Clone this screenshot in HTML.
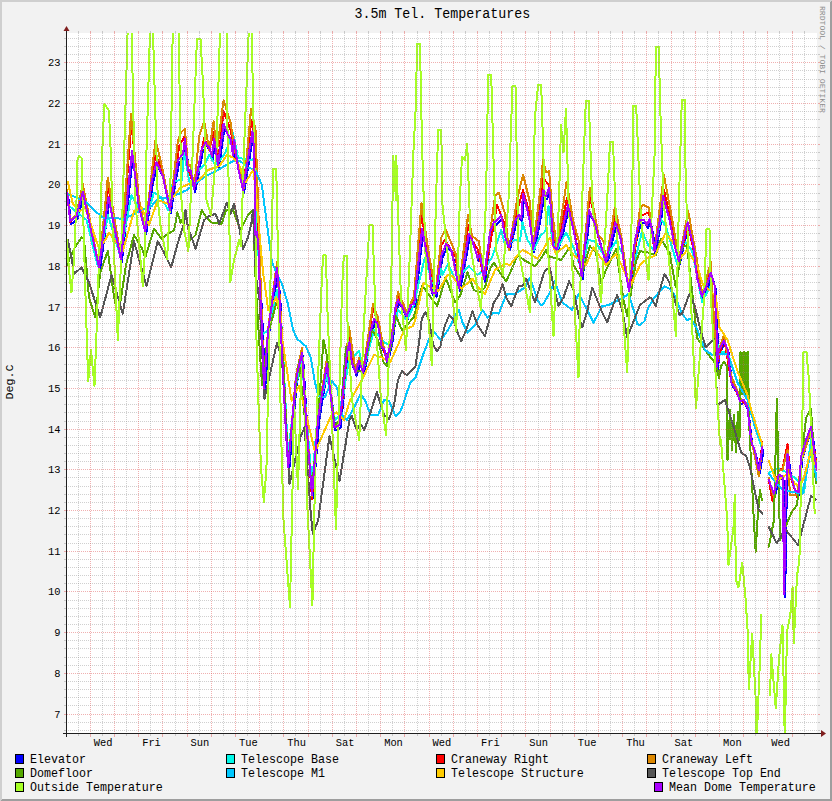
<!DOCTYPE html><html><head><meta charset="utf-8"><style>html,body{margin:0;padding:0;width:832px;height:801px;overflow:hidden;background:#f2f2f2}svg{display:block}text{font-family:"Liberation Mono"}</style></head><body>
<svg width="832" height="801" viewBox="0 0 832 801" shape-rendering="crispEdges">
<rect x="0" y="0" width="832" height="801" fill="#f2f2f2"/>
<polygon points="0,0 832,0 830,2 2,2 2,799 0,801" fill="#cfcfcf"/>
<polygon points="832,0 832,801 0,801 2,799 830,799 830,2" fill="#9e9e9e"/>
<rect x="67" y="33" width="750" height="700" fill="#ffffff"/>
<clipPath id="cv"><rect x="67" y="33" width="750" height="700"/></clipPath><g fill="none" stroke-width="2" stroke-linejoin="round" stroke-linecap="round" shape-rendering="crispEdges" clip-path="url(#cv)"><polyline stroke="#0000ff" points="68.1,195.5 71.2,224.2 77.5,219.0 83.8,195.0 100.0,270.5 109.4,200.0 121.9,262.4 133.0,154.0 140.0,210.5 146.2,234.2 152.5,185.5 157.5,165.0 163.8,179.0 171.0,213.0 174.0,191.8 179.0,163.0 184.0,156.8 185.9,141.8 189.0,174.2 191.5,173.0 195.2,192.0 202.8,151.8 206.5,145.5 210.2,150.5 212.8,159.2 215.2,141.8 219.0,168.0 224.6,126.8 229.0,138.0 231.5,141.8 234.0,158.0 235.2,143.0 239.0,170.5 244.0,193.0 253.4,134.2 255.2,153.0 256.5,238.0 258.0,235.0 259.5,253.0 260.5,283.0 261.8,308.0 263.0,333.0 265.0,391.0 269.2,333.0 278.0,270.5 280.5,303.0 281.8,333.0 286.8,433.0 289.2,470.5 296.8,383.0 303.0,355.5 306.8,420.5 313.0,498.0 319.2,420.5 328.0,366.8 335.5,430.5 340.5,428.0 348.0,355.5 350.5,345.5 352.8,365.5 356.5,375.5 360.2,364.2 364.0,375.5 371.5,334.2 375.2,321.8 379.0,328.0 382.8,350.5 385.2,351.8 387.8,364.2 392.8,340.5 396.5,310.5 399.0,303.0 402.8,309.2 407.8,319.2 411.5,308.0 415.2,306.8 417.6,281.7 423.1,232.2 430.0,268.0 432.7,295.4 436.8,296.8 442.3,258.3 447.2,246.8 447.8,247.3 452.2,253.0 460.0,291.0 463.5,273.0 469.8,236.8 473.5,244.2 478.5,260.5 481.0,258.0 485.0,282.0 491.0,235.5 494.8,225.5 498.5,223.0 502.2,218.0 506.0,239.2 509.8,250.5 516.0,224.2 519.8,218.0 522.2,221.8 524.1,196.8 527.2,208.0 531.0,225.5 534.1,251.8 539.8,223.0 542.0,210.5 544.5,193.0 545.0,198.0 547.0,199.2 550.1,190.5 552.0,213.0 554.5,249.2 557.6,253.0 563.2,233.0 568.9,208.0 574.5,233.0 579.5,256.8 582.6,279.2 585.8,250.5 590.1,213.0 595.8,226.8 603.2,253.0 607.0,265.5 612.0,243.0 616.4,225.5 622.0,243.0 624.5,263.0 630.1,294.2 635.8,244.2 641.0,223.0 644.9,223.0 648.0,228.0 650.5,221.8 653.0,233.0 655.5,254.2 660.5,225.5 664.2,199.2 670.5,223.0 675.5,248.0 679.9,264.2 684.2,244.2 688.6,225.5 694.2,248.0 698.0,280.5 703.0,299.2 708.0,288.0 711.8,275.5 715.5,288.0 717.5,333.0 717.5,370.0 719.8,353.0 724.8,344.2 728.5,351.8 732.2,385.5 737.2,393.0 741.0,404.2 744.8,403.0 748.5,410.5 752.2,444.2 756.0,454.2 759.8,473.0 763.5,450.5"/><polyline stroke="#0000ff" points="769.8,483.0 774.8,496.8 779.8,478.0 783.5,479.2 785.3,597.0 786.0,523.0 788.5,456.8 791.0,475.5 796.0,493.0 799.8,495.5 802.0,460.0 807.0,443.0 812.0,429.6 816.8,467.0 818.0,473.0"/><polyline stroke="#00f8e8" points="67.8,205.0 86.5,220.0 97.8,266.0 108.0,215.0 120.0,255.0 131.5,195.0 141.5,213.8 144.0,226.2 154.0,192.5 161.5,197.5 168.0,210.0 173.0,181.2 181.8,180.0 184.2,152.5 190.0,185.0 199.2,170.0 204.2,165.0 209.2,155.0 215.5,165.0 224.2,155.0 233.0,133.1 238.0,157.5 248.0,160.0 251.8,160.0 255.5,157.5 257.4,230.0 262.0,335.0 268.0,330.0 277.0,290.0 282.0,330.0 288.0,455.0 296.0,385.0 302.0,362.0 306.0,410.0 312.0,485.0 318.0,410.0 327.0,375.0 335.0,420.0 340.0,415.0 349.0,360.0 359.2,351.2 363.0,372.0 374.0,330.0 384.2,342.5 390.0,345.0 398.0,310.0 407.0,320.0 414.0,305.0 416.6,292.4 424.8,258.0 429.0,271.8 435.8,290.0 441.3,269.0 442.5,275.0 447.5,265.0 448.2,263.6 455.0,280.0 462.5,272.5 468.8,266.2 477.5,275.0 484.0,270.0 492.5,256.2 501.2,230.0 505.0,245.0 515.0,240.0 520.0,241.2 522.5,222.5 527.5,240.0 533.8,250.0 540.0,236.2 544.0,232.5 546.0,230.0 548.5,206.2 552.2,240.0 556.6,250.0 566.0,232.5 573.5,247.5 581.6,270.0 588.5,240.0 594.8,241.2 606.0,258.0 616.0,241.2 623.0,255.0 629.0,285.0 640.0,240.0 642.0,231.2 648.2,245.0 654.5,250.0 660.8,218.8 665.8,226.2 677.0,263.8 684.5,241.2 692.0,250.0 697.0,275.0 702.0,302.0 711.0,285.0 716.0,340.0 720.0,352.0 727.5,352.0 737.5,382.0 747.5,398.0 755.0,427.0 762.5,450.0"/><polyline stroke="#00f8e8" points="768.8,472.5 777.5,468.8 787.5,472.5 797.5,480.0 804.0,492.5 811.0,440.0 817.0,470.0"/><polyline stroke="#ff0000" points="67.1,191.0 70.2,222.0 76.5,215.0 82.8,188.0 99.0,267.0 108.0,185.0 120.9,259.0 131.5,122.0 139.0,204.0 145.2,231.0 155.5,154.0 162.8,172.0 170.0,210.0 179.2,146.2 184.9,136.0 188.0,168.0 194.2,188.0 204.2,137.5 209.2,150.0 214.0,132.0 218.0,163.0 223.6,111.2 230.5,130.0 235.5,154.0 243.0,189.0 251.5,120.0 255.5,140.0 258.0,220.0 264.0,386.0 268.0,330.0 277.0,265.0 280.0,300.0 286.0,430.0 288.2,467.0 296.0,378.0 302.0,350.0 306.0,416.0 312.0,499.0 318.0,416.0 327.0,361.0 334.5,427.0 340.0,424.0 349.0,335.0 355.5,372.0 359.0,360.0 363.0,372.0 373.0,309.0 378.0,322.0 382.0,345.0 387.0,361.0 392.0,335.0 398.0,296.0 406.8,314.0 414.0,300.0 421.4,214.0 429.0,260.0 435.8,293.0 441.3,245.0 445.0,240.0 456.0,258.0 459.0,288.0 468.0,225.0 472.0,240.0 478.0,250.0 484.0,279.0 497.0,205.0 505.0,225.0 508.8,250.0 517.5,210.0 523.0,190.0 530.0,215.0 533.0,249.0 542.0,190.0 543.0,178.0 549.0,185.0 552.0,210.0 556.6,250.0 567.0,198.0 573.5,226.0 581.6,276.0 589.8,195.0 598.5,238.0 606.0,262.0 615.0,215.0 621.0,238.0 629.0,291.0 640.0,215.0 643.0,215.0 649.0,212.0 654.5,251.0 664.0,190.0 673.0,230.0 679.0,261.0 688.0,225.0 697.0,265.0 702.0,296.0 711.0,268.0 716.5,366.0 724.0,338.0 731.0,380.0 740.0,400.0 747.5,406.0 751.0,440.0 758.8,472.0 762.5,442.5"/><polyline stroke="#ff0000" points="768.8,480.0 772.5,501.2 778.8,470.0 782.5,468.8 787.5,443.8 790.0,475.0 797.5,497.5 801.0,460.0 811.0,428.0 817.0,468.0"/><polyline stroke="#dd8800" points="67.1,190.0 70.2,221.0 76.5,214.0 82.8,184.0 99.0,267.0 107.8,177.5 120.9,258.0 131.0,114.0 139.0,200.0 145.2,230.0 155.5,140.0 162.8,170.0 170.0,209.0 178.0,140.0 181.0,132.5 184.9,128.8 188.0,166.2 190.5,165.0 194.2,187.5 199.2,136.2 204.2,121.2 209.2,150.0 213.6,121.2 216.8,152.5 223.6,100.0 230.5,122.5 235.5,152.5 244.0,188.0 251.0,108.8 255.5,130.0 258.0,200.0 264.0,386.0 268.0,330.0 277.0,262.0 280.0,300.0 286.0,430.0 288.2,466.0 296.0,375.0 302.0,348.0 306.0,415.0 312.0,496.0 318.0,415.0 327.0,358.0 334.5,427.0 340.0,422.0 349.0,327.0 355.5,371.0 359.0,358.0 363.0,371.0 373.0,303.8 378.0,318.0 382.0,340.0 387.0,360.0 392.0,333.0 398.0,292.0 406.8,312.0 414.0,296.0 421.5,203.0 429.0,255.0 435.8,292.0 441.3,237.5 445.5,229.2 456.2,255.0 459.0,287.0 468.1,214.4 472.0,236.0 478.8,241.2 484.0,277.0 495.0,196.2 498.8,192.5 505.0,213.8 508.8,250.0 517.5,197.5 523.1,175.0 530.0,202.5 533.0,247.5 541.2,182.5 542.9,160.0 546.0,172.5 549.1,171.2 552.2,210.0 556.6,249.0 566.6,181.9 573.5,222.5 578.5,240.0 581.6,275.0 589.8,187.5 598.5,235.0 603.5,241.2 606.0,262.0 614.8,207.5 621.0,235.0 629.0,290.0 640.0,208.8 643.2,205.0 648.9,207.5 654.5,250.0 663.9,175.0 673.2,225.0 678.9,260.0 688.2,211.2 697.0,260.0 702.0,295.0 710.8,262.0 716.5,365.0 718.8,350.0 723.8,335.0 731.0,375.0 740.0,398.0 747.5,404.0 751.0,438.0 758.8,476.2 762.5,445.0"/><polyline stroke="#dd8800" points="768.8,478.0 773.8,497.5 778.8,470.0 782.5,470.0 787.5,450.0 790.0,495.0 797.5,495.0 801.0,462.0 811.0,430.0 817.0,470.0"/><polyline stroke="#55a800" points="67.0,265.0 74.0,248.8 81.5,237.5 84.0,238.8 89.0,297.5 95.2,317.5 100.2,272.5 107.8,251.0 113.0,290.0 118.0,318.0 126.0,265.0 134.0,235.0 141.5,247.5 145.2,257.5 154.0,228.8 161.5,238.8 166.5,235.0 174.2,230.0 177.4,212.5 180.5,222.5 185.5,215.0 190.5,240.0 195.5,235.0 201.8,210.0 205.5,216.2 211.8,222.5 221.8,223.8 226.0,210.0 233.0,210.0 240.5,230.0 248.0,215.0 251.8,211.2 253.0,211.0 256.0,290.0 262.0,385.0 268.0,335.0 277.0,300.0 282.0,330.0 288.0,465.0 296.0,385.0 299.0,362.0 305.0,420.0 312.0,490.0 318.0,420.0 323.5,340.0 327.0,356.0 334.5,425.0 340.0,420.0 346.0,347.0 355.0,370.0 363.0,372.0 372.0,330.0 378.0,340.0 383.5,362.0 387.0,366.0 396.0,316.0 401.8,330.0 408.0,323.8 413.9,317.0 422.1,285.5 437.2,306.0 445.0,280.0 445.5,277.3 455.0,302.5 460.0,296.2 467.5,272.5 473.8,290.0 480.0,292.5 485.0,287.5 490.0,268.8 493.8,262.5 498.8,271.2 506.2,281.2 512.5,267.5 517.5,255.0 523.8,260.0 535.0,266.2 542.5,256.2 546.0,250.0 548.5,256.2 561.0,260.0 569.8,247.5 573.5,265.0 581.0,277.5 589.8,246.2 596.0,252.5 601.0,283.0 606.0,270.0 616.0,248.8 623.5,300.0 627.2,316.2 636.0,261.2 640.0,251.2 648.2,252.5 655.8,255.0 660.8,238.8 669.5,252.5 675.8,287.5 682.0,247.5 687.0,245.0 694.5,312.5 697.0,337.5 705.0,350.0 716.5,365.0 719.0,378.0 721.0,366.0 724.0,362.0 727.0,366.0 727.5,460.0 730.0,410.0 732.0,450.0 734.0,415.0 736.0,452.0 738.0,412.0 739.5,440.0 740.5,352.0 742.0,394.0 744.0,352.0 746.0,394.0 748.0,352.0 748.6,394.0 749.0,420.0 753.8,520.0 755.7,551.6 757.5,520.0 760.0,490.0 762.0,500.0"/><polyline stroke="#55a800" points="768.7,546.7 774.0,520.0 776.8,399.0 780.0,540.0 791.4,512.6 797.0,505.0 806.0,418.0 811.0,408.7 815.8,483.0"/><rect x="740.5" y="352" width="8" height="42" fill="#55a800" stroke="none"/><polyline stroke="#00c8ff" points="67.8,194.0 71.5,195.6 85.2,201.2 95.2,211.2 102.8,217.5 116.5,217.5 122.8,220.0 134.0,213.8 144.0,208.8 151.5,206.2 159.0,197.5 168.0,198.8 186.8,190.0 205.5,176.2 218.0,170.0 228.0,163.8 233.0,161.2 240.5,161.2 248.0,167.5 255.5,170.0 261.8,185.0 272.0,262.5 277.0,273.8 282.0,283.8 288.2,305.0 293.2,330.0 297.0,338.8 305.8,346.2 310.8,357.5 314.5,380.0 318.2,396.2 324.5,397.5 332.0,381.2 337.0,387.5 342.0,415.0 347.0,420.0 354.2,407.5 360.5,393.8 365.5,401.2 370.5,415.0 378.0,415.0 384.2,400.0 389.2,401.2 395.5,416.2 400.5,411.2 403.0,405.0 406.8,392.5 410.5,382.5 415.5,377.5 423.0,355.0 429.2,338.8 433.0,331.0 441.0,340.0 448.0,330.0 452.0,322.5 455.0,315.0 458.8,310.0 462.5,322.5 467.5,332.5 475.0,325.0 482.5,310.0 487.5,317.5 493.8,312.5 498.8,313.8 505.0,297.5 507.5,293.8 515.0,293.8 525.0,287.5 530.0,277.5 537.5,300.0 541.0,305.0 542.5,305.0 543.5,303.8 549.8,292.5 554.8,281.2 562.2,302.5 572.2,310.0 578.5,293.8 586.0,307.5 593.5,322.5 602.2,306.2 608.5,305.0 616.0,301.2 623.5,297.5 628.5,293.8 636.0,317.5 637.0,323.8 639.5,325.0 640.0,325.0 644.5,321.2 648.2,307.5 654.5,297.5 660.8,290.0 664.5,286.2 669.5,288.8 674.5,295.0 682.0,313.8 687.0,320.0 690.8,318.8 697.0,328.8 705.0,350.0 712.5,355.0 720.0,354.0 727.5,354.0 737.5,382.5 747.5,400.0 755.0,427.5 762.5,445.0"/><polyline stroke="#00c8ff" points="768.8,473.8 782.5,490.0 802.5,493.8 811.0,450.0 817.0,480.0"/><polyline stroke="#ffcc00" points="67.8,182.0 72.8,203.8 80.2,211.2 85.0,207.0 99.0,248.8 105.2,240.0 109.0,232.5 122.8,251.2 134.0,211.2 141.5,207.5 149.0,225.0 157.8,200.0 168.0,203.8 180.5,187.5 199.2,180.0 208.0,170.0 219.2,166.2 226.8,155.0 233.0,157.5 239.2,165.0 245.5,182.5 253.0,170.0 255.5,186.2 258.0,217.5 259.5,233.8 263.2,273.8 264.2,280.0 268.2,310.0 276.4,297.5 280.8,317.5 282.0,337.5 291.6,401.0 299.0,386.0 305.0,410.0 315.0,452.0 331.0,416.0 336.6,412.5 344.0,420.0 349.8,401.0 360.5,382.5 374.0,355.0 381.0,357.0 390.0,362.5 398.0,345.0 404.0,330.0 413.0,326.0 415.2,320.0 423.5,282.8 430.3,286.9 438.6,291.0 440.0,288.0 447.5,275.0 452.5,276.2 461.2,288.8 472.5,278.8 477.5,286.2 485.0,293.8 495.0,270.0 505.0,263.8 510.0,265.0 517.5,255.0 522.5,250.0 527.5,252.5 537.5,258.8 544.0,248.0 549.8,237.5 556.0,253.8 566.0,245.0 573.5,255.0 586.0,265.0 593.5,247.5 606.0,265.0 616.0,253.8 631.0,285.0 640.0,265.0 648.2,257.5 654.5,256.2 665.8,232.5 674.5,245.0 680.8,258.0 687.0,250.0 697.0,265.0 703.0,285.0 709.5,290.0 715.8,296.2 719.5,327.5 727.5,340.0 737.5,371.2 747.5,395.0 751.2,410.0 757.5,430.0 762.5,445.0"/><polyline stroke="#ffcc00" points="768.8,461.2 776.2,481.2 787.5,473.8 795.0,483.8 800.0,486.2 804.0,477.5 811.0,450.0 817.0,470.0"/><polyline stroke="#555555" points="67.8,240.0 71.5,257.5 74.0,273.8 81.5,267.5 89.0,282.5 100.2,317.5 111.5,275.0 122.8,313.8 134.0,241.2 146.5,286.2 157.8,241.2 164.0,252.5 171.1,267.5 178.0,242.5 184.2,222.5 185.5,210.0 188.0,227.5 195.5,248.8 204.2,220.0 209.2,216.2 215.5,213.8 219.2,223.8 226.8,202.5 230.5,213.8 234.2,203.8 239.2,227.5 243.0,248.8 248.0,237.5 251.8,221.2 253.0,210.0 256.0,277.0 259.5,300.0 264.5,398.8 277.0,342.5 282.0,360.0 289.5,483.8 300.8,436.2 304.5,427.5 310.8,513.8 312.9,534.4 318.2,520.0 329.5,436.2 339.5,481.2 349.5,420.0 351.8,416.2 356.8,430.0 360.5,423.8 364.2,430.0 370.5,412.5 376.8,391.9 384.0,415.0 389.0,419.0 394.0,405.0 398.0,380.0 401.8,371.2 406.8,375.0 410.5,371.2 415.5,366.2 419.2,341.2 421.8,318.8 425.5,311.9 429.2,321.2 433.0,343.8 436.8,351.2 440.5,346.2 444.2,327.5 449.2,315.0 453.8,320.0 457.5,332.5 461.2,341.2 466.2,330.0 472.5,311.2 477.5,325.0 485.0,336.2 493.8,302.5 498.8,295.0 502.5,283.8 506.2,297.5 511.2,306.2 518.8,286.2 522.5,286.2 526.2,278.8 530.0,288.8 535.0,302.5 544.0,272.5 546.0,270.0 549.8,267.5 553.5,286.2 558.5,306.2 563.5,297.5 569.1,281.2 573.5,290.0 578.5,315.0 582.2,327.5 587.2,311.2 592.2,287.5 597.2,300.0 602.2,312.5 607.2,322.5 612.2,307.5 617.2,295.0 622.2,310.0 627.2,337.5 636.0,315.0 640.0,305.0 649.5,297.5 652.0,298.8 655.8,306.2 659.5,291.2 664.5,273.8 669.5,282.5 675.8,303.8 679.5,315.0 682.0,313.8 689.5,293.8 694.5,305.0 700.8,331.2 705.8,347.5 713.8,338.8 717.5,405.0 725.0,400.0 733.8,427.5 741.2,452.5 746.2,456.2 750.0,467.5 755.0,492.5 758.8,510.0 762.5,513.8"/><polyline stroke="#555555" points="768.7,527.0 776.8,543.4 785.0,528.8 798.0,545.0 811.0,496.0 815.8,499.6"/><polyline stroke="#a6ff24" points="67.0,240.0 69.0,270.0 71.5,292.5 74.0,260.0 76.5,200.0 77.5,160.0 79.0,156.0 81.5,158.0 82.8,200.0 85.0,280.0 88.2,381.0 91.0,350.0 94.5,386.0 97.0,320.0 101.0,200.0 102.8,135.0 104.5,104.0 108.5,110.0 110.0,130.0 113.0,230.0 117.8,340.0 120.0,290.0 122.8,200.0 127.8,25.0 131.5,25.0 135.2,200.0 142.8,286.0 145.0,250.0 146.5,150.0 150.2,25.0 152.8,25.0 157.8,200.0 161.0,230.0 167.1,258.8 170.2,200.0 172.8,25.0 178.5,25.0 181.5,200.0 184.0,230.0 188.4,251.2 192.8,150.0 196.5,50.0 197.5,38.5 200.5,38.5 202.8,80.0 204.0,110.0 206.5,200.0 211.0,215.0 216.5,150.0 220.2,25.0 226.5,25.0 226.5,80.0 229.0,200.0 230.2,282.5 234.0,260.0 236.5,251.0 239.0,240.0 241.0,246.0 244.0,150.0 249.0,25.0 251.5,25.0 255.2,200.0 256.5,340.0 259.0,420.0 261.2,470.0 263.8,501.9 266.4,470.0 270.0,300.0 272.5,200.0 273.2,168.5 276.2,168.5 277.0,200.0 280.8,420.0 283.5,520.0 290.0,606.8 292.7,480.0 294.0,400.0 298.0,489.0 301.0,380.0 303.0,358.0 305.0,400.0 307.0,500.0 312.4,605.5 315.0,480.0 318.0,380.0 321.4,290.0 323.0,255.4 326.0,255.4 327.0,300.0 332.0,420.0 336.0,529.4 338.6,420.0 342.0,290.0 343.8,255.7 346.8,255.7 347.6,330.0 352.0,400.0 359.2,440.0 363.6,330.0 368.0,250.0 369.5,224.8 372.5,224.8 376.0,330.0 381.0,400.0 386.1,435.0 391.0,300.0 393.2,156.0 396.0,200.0 396.2,156.0 401.0,300.0 406.0,350.0 410.0,250.0 413.5,150.0 416.0,102.5 417.0,43.5 420.0,43.5 421.0,97.5 422.2,150.0 427.0,300.0 431.8,365.0 436.0,200.0 438.2,129.8 441.2,129.8 442.2,177.0 442.2,202.0 447.2,250.0 456.2,331.0 459.8,200.0 462.0,157.0 465.0,160.0 467.2,143.8 471.0,250.0 481.0,310.0 486.0,200.0 488.2,74.8 491.2,74.8 496.0,250.0 503.0,275.0 508.5,200.0 512.5,86.0 515.5,86.0 518.5,250.0 530.0,312.5 533.5,200.0 534.8,117.5 538.2,84.8 541.2,84.8 544.8,200.0 553.5,336.2 559.0,200.0 561.0,125.0 563.5,152.5 566.0,108.8 568.5,200.0 578.5,377.5 582.2,200.0 585.8,101.0 588.8,101.0 592.2,200.0 601.0,302.5 607.2,200.0 610.0,142.2 613.0,142.2 616.0,220.0 627.2,372.5 632.2,200.0 633.2,106.0 636.2,106.0 641.0,220.0 648.5,280.0 654.8,150.0 655.8,47.2 658.8,47.2 660.2,107.0 663.5,200.0 676.0,336.0 679.0,200.0 681.8,99.8 684.8,99.8 685.2,157.0 687.0,220.0 696.0,408.0 704.0,300.0 706.5,229.0 709.5,229.0 711.0,300.0 720.0,444.0 721.0,440.0 727.2,520.0 728.5,565.0 733.5,527.5 734.8,495.0 736.0,580.0 738.5,587.5 742.2,562.5 745.4,596.0 747.7,632.0 748.8,689.0 752.2,634.0 755.5,695.0 756.7,740.0 760.0,659.0 761.2,615.0"/><polyline stroke="#a6ff24" points="770.0,695.0 771.3,654.4 775.8,708.0 779.0,659.0 782.5,625.0 784.8,740.0 787.0,632.0 790.4,614.0 792.6,587.0 793.8,643.0 797.0,576.0 799.4,560.0 802.3,422.0 803.5,352.0 806.5,352.0 809.0,381.0 812.0,450.0 814.7,513.0"/><polyline stroke="#aa00ff" points="67.1,192.5 70.2,221.2 76.5,216.0 82.8,192.0 99.0,267.5 108.4,197.0 120.9,259.4 132.0,151.0 139.0,207.5 145.2,231.2 151.5,182.5 156.5,162.0 162.8,176.0 170.0,210.0 173.0,188.8 178.0,160.0 183.0,153.8 184.9,138.8 188.0,171.2 190.5,170.0 194.2,189.0 201.8,148.8 205.5,142.5 209.2,147.5 211.8,156.2 214.2,138.8 218.0,165.0 223.6,123.8 228.0,135.0 230.5,138.8 233.0,155.0 234.2,140.0 238.0,167.5 243.0,190.0 252.4,131.2 254.2,150.0 255.5,235.0 257.0,232.0 258.5,250.0 259.5,280.0 260.8,305.0 262.0,330.0 264.0,388.0 268.2,330.0 277.0,267.5 279.5,300.0 280.8,330.0 285.8,430.0 288.2,467.5 295.8,380.0 302.0,352.5 305.8,417.5 312.0,495.0 318.2,417.5 327.0,363.8 334.5,427.5 339.5,425.0 347.0,352.5 349.5,342.5 351.8,362.5 355.5,372.5 359.2,361.2 363.0,372.5 370.5,331.2 374.2,318.8 378.0,325.0 381.8,347.5 384.2,348.8 386.8,361.2 391.8,337.5 395.5,307.5 398.0,300.0 401.8,306.2 406.8,316.2 410.5,305.0 414.2,303.8 416.6,278.7 422.1,229.2 429.0,265.0 431.7,292.4 435.8,293.8 441.3,255.3 446.2,243.8 446.8,244.3 451.2,250.0 459.0,288.0 462.5,270.0 468.8,233.8 472.5,241.2 477.5,257.5 480.0,255.0 484.0,279.0 490.0,232.5 493.8,222.5 497.5,220.0 501.2,215.0 505.0,236.2 508.8,247.5 515.0,221.2 518.8,215.0 521.2,218.8 523.1,193.8 526.2,205.0 530.0,222.5 533.1,248.8 538.8,220.0 541.0,207.5 543.5,190.0 544.0,195.0 546.0,196.2 549.1,187.5 551.0,210.0 553.5,246.2 556.6,250.0 562.2,230.0 567.9,205.0 573.5,230.0 578.5,253.8 581.6,276.2 584.8,247.5 589.1,210.0 594.8,223.8 602.2,250.0 606.0,262.5 611.0,240.0 615.4,222.5 621.0,240.0 623.5,260.0 629.1,291.2 634.8,241.2 640.0,220.0 643.9,220.0 647.0,225.0 649.5,218.8 652.0,230.0 654.5,251.2 659.5,222.5 663.2,196.2 669.5,220.0 674.5,245.0 678.9,261.2 683.2,241.2 687.6,222.5 693.2,245.0 697.0,277.5 702.0,296.2 707.0,285.0 710.8,272.5 714.5,285.0 716.5,330.0 716.5,367.0 718.8,350.0 723.8,341.2 727.5,348.8 731.2,382.5 736.2,390.0 740.0,401.2 743.8,400.0 747.5,407.5 751.2,441.2 755.0,451.2 758.8,470.0 762.5,447.5"/><polyline stroke="#aa00ff" points="768.8,480.0 773.8,493.8 778.8,475.0 782.5,476.2 784.3,594.0 785.0,520.0 787.5,453.8 790.0,472.5 795.0,490.0 798.8,492.5 801.0,457.0 806.0,440.0 811.0,426.6 815.8,464.0 817.0,470.0"/></g>
<rect x="64" y="730" width="2" height="1" fill="rgba(143,143,143,0.42)"/><rect x="818" y="730" width="2" height="1" fill="rgba(143,143,143,0.42)"/><line x1="67" y1="730.5" x2="817" y2="730.5" stroke="rgba(143,143,143,0.42)" stroke-width="1" stroke-dasharray="1 1" stroke-dashoffset="1"/><rect x="64" y="722" width="2" height="1" fill="rgba(143,143,143,0.42)"/><rect x="818" y="722" width="2" height="1" fill="rgba(143,143,143,0.42)"/><line x1="67" y1="722.5" x2="817" y2="722.5" stroke="rgba(143,143,143,0.42)" stroke-width="1" stroke-dasharray="1 1" stroke-dashoffset="1"/><rect x="64" y="714" width="2" height="1" fill="rgba(222,79,79,0.45)"/><rect x="818" y="714" width="2" height="1" fill="rgba(222,79,79,0.45)"/><line x1="67" y1="714.5" x2="817" y2="714.5" stroke="rgba(222,79,79,0.45)" stroke-width="1" stroke-dasharray="1 1" stroke-dashoffset="0"/><rect x="64" y="705" width="2" height="1" fill="rgba(143,143,143,0.42)"/><rect x="818" y="705" width="2" height="1" fill="rgba(143,143,143,0.42)"/><line x1="67" y1="705.5" x2="817" y2="705.5" stroke="rgba(143,143,143,0.42)" stroke-width="1" stroke-dasharray="1 1" stroke-dashoffset="1"/><rect x="64" y="697" width="2" height="1" fill="rgba(143,143,143,0.42)"/><rect x="818" y="697" width="2" height="1" fill="rgba(143,143,143,0.42)"/><line x1="67" y1="697.5" x2="817" y2="697.5" stroke="rgba(143,143,143,0.42)" stroke-width="1" stroke-dasharray="1 1" stroke-dashoffset="1"/><rect x="64" y="689" width="2" height="1" fill="rgba(143,143,143,0.42)"/><rect x="818" y="689" width="2" height="1" fill="rgba(143,143,143,0.42)"/><line x1="67" y1="689.5" x2="817" y2="689.5" stroke="rgba(143,143,143,0.42)" stroke-width="1" stroke-dasharray="1 1" stroke-dashoffset="1"/><rect x="64" y="681" width="2" height="1" fill="rgba(143,143,143,0.42)"/><rect x="818" y="681" width="2" height="1" fill="rgba(143,143,143,0.42)"/><line x1="67" y1="681.5" x2="817" y2="681.5" stroke="rgba(143,143,143,0.42)" stroke-width="1" stroke-dasharray="1 1" stroke-dashoffset="1"/><rect x="64" y="673" width="2" height="1" fill="rgba(222,79,79,0.45)"/><rect x="818" y="673" width="2" height="1" fill="rgba(222,79,79,0.45)"/><line x1="67" y1="673.5" x2="817" y2="673.5" stroke="rgba(222,79,79,0.45)" stroke-width="1" stroke-dasharray="1 1" stroke-dashoffset="0"/><rect x="64" y="665" width="2" height="1" fill="rgba(143,143,143,0.42)"/><rect x="818" y="665" width="2" height="1" fill="rgba(143,143,143,0.42)"/><line x1="67" y1="665.5" x2="817" y2="665.5" stroke="rgba(143,143,143,0.42)" stroke-width="1" stroke-dasharray="1 1" stroke-dashoffset="1"/><rect x="64" y="657" width="2" height="1" fill="rgba(143,143,143,0.42)"/><rect x="818" y="657" width="2" height="1" fill="rgba(143,143,143,0.42)"/><line x1="67" y1="657.5" x2="817" y2="657.5" stroke="rgba(143,143,143,0.42)" stroke-width="1" stroke-dasharray="1 1" stroke-dashoffset="1"/><rect x="64" y="648" width="2" height="1" fill="rgba(143,143,143,0.42)"/><rect x="818" y="648" width="2" height="1" fill="rgba(143,143,143,0.42)"/><line x1="67" y1="648.5" x2="817" y2="648.5" stroke="rgba(143,143,143,0.42)" stroke-width="1" stroke-dasharray="1 1" stroke-dashoffset="1"/><rect x="64" y="640" width="2" height="1" fill="rgba(143,143,143,0.42)"/><rect x="818" y="640" width="2" height="1" fill="rgba(143,143,143,0.42)"/><line x1="67" y1="640.5" x2="817" y2="640.5" stroke="rgba(143,143,143,0.42)" stroke-width="1" stroke-dasharray="1 1" stroke-dashoffset="1"/><rect x="64" y="632" width="2" height="1" fill="rgba(222,79,79,0.45)"/><rect x="818" y="632" width="2" height="1" fill="rgba(222,79,79,0.45)"/><line x1="67" y1="632.5" x2="817" y2="632.5" stroke="rgba(222,79,79,0.45)" stroke-width="1" stroke-dasharray="1 1" stroke-dashoffset="0"/><rect x="64" y="624" width="2" height="1" fill="rgba(143,143,143,0.42)"/><rect x="818" y="624" width="2" height="1" fill="rgba(143,143,143,0.42)"/><line x1="67" y1="624.5" x2="817" y2="624.5" stroke="rgba(143,143,143,0.42)" stroke-width="1" stroke-dasharray="1 1" stroke-dashoffset="1"/><rect x="64" y="616" width="2" height="1" fill="rgba(143,143,143,0.42)"/><rect x="818" y="616" width="2" height="1" fill="rgba(143,143,143,0.42)"/><line x1="67" y1="616.5" x2="817" y2="616.5" stroke="rgba(143,143,143,0.42)" stroke-width="1" stroke-dasharray="1 1" stroke-dashoffset="1"/><rect x="64" y="608" width="2" height="1" fill="rgba(143,143,143,0.42)"/><rect x="818" y="608" width="2" height="1" fill="rgba(143,143,143,0.42)"/><line x1="67" y1="608.5" x2="817" y2="608.5" stroke="rgba(143,143,143,0.42)" stroke-width="1" stroke-dasharray="1 1" stroke-dashoffset="1"/><rect x="64" y="600" width="2" height="1" fill="rgba(143,143,143,0.42)"/><rect x="818" y="600" width="2" height="1" fill="rgba(143,143,143,0.42)"/><line x1="67" y1="600.5" x2="817" y2="600.5" stroke="rgba(143,143,143,0.42)" stroke-width="1" stroke-dasharray="1 1" stroke-dashoffset="1"/><rect x="64" y="591" width="2" height="1" fill="rgba(222,79,79,0.45)"/><rect x="818" y="591" width="2" height="1" fill="rgba(222,79,79,0.45)"/><line x1="67" y1="591.5" x2="817" y2="591.5" stroke="rgba(222,79,79,0.45)" stroke-width="1" stroke-dasharray="1 1" stroke-dashoffset="0"/><rect x="64" y="583" width="2" height="1" fill="rgba(143,143,143,0.42)"/><rect x="818" y="583" width="2" height="1" fill="rgba(143,143,143,0.42)"/><line x1="67" y1="583.5" x2="817" y2="583.5" stroke="rgba(143,143,143,0.42)" stroke-width="1" stroke-dasharray="1 1" stroke-dashoffset="1"/><rect x="64" y="575" width="2" height="1" fill="rgba(143,143,143,0.42)"/><rect x="818" y="575" width="2" height="1" fill="rgba(143,143,143,0.42)"/><line x1="67" y1="575.5" x2="817" y2="575.5" stroke="rgba(143,143,143,0.42)" stroke-width="1" stroke-dasharray="1 1" stroke-dashoffset="1"/><rect x="64" y="567" width="2" height="1" fill="rgba(143,143,143,0.42)"/><rect x="818" y="567" width="2" height="1" fill="rgba(143,143,143,0.42)"/><line x1="67" y1="567.5" x2="817" y2="567.5" stroke="rgba(143,143,143,0.42)" stroke-width="1" stroke-dasharray="1 1" stroke-dashoffset="1"/><rect x="64" y="559" width="2" height="1" fill="rgba(143,143,143,0.42)"/><rect x="818" y="559" width="2" height="1" fill="rgba(143,143,143,0.42)"/><line x1="67" y1="559.5" x2="817" y2="559.5" stroke="rgba(143,143,143,0.42)" stroke-width="1" stroke-dasharray="1 1" stroke-dashoffset="1"/><rect x="64" y="551" width="2" height="1" fill="rgba(222,79,79,0.45)"/><rect x="818" y="551" width="2" height="1" fill="rgba(222,79,79,0.45)"/><line x1="67" y1="551.5" x2="817" y2="551.5" stroke="rgba(222,79,79,0.45)" stroke-width="1" stroke-dasharray="1 1" stroke-dashoffset="0"/><rect x="64" y="543" width="2" height="1" fill="rgba(143,143,143,0.42)"/><rect x="818" y="543" width="2" height="1" fill="rgba(143,143,143,0.42)"/><line x1="67" y1="543.5" x2="817" y2="543.5" stroke="rgba(143,143,143,0.42)" stroke-width="1" stroke-dasharray="1 1" stroke-dashoffset="1"/><rect x="64" y="534" width="2" height="1" fill="rgba(143,143,143,0.42)"/><rect x="818" y="534" width="2" height="1" fill="rgba(143,143,143,0.42)"/><line x1="67" y1="534.5" x2="817" y2="534.5" stroke="rgba(143,143,143,0.42)" stroke-width="1" stroke-dasharray="1 1" stroke-dashoffset="1"/><rect x="64" y="526" width="2" height="1" fill="rgba(143,143,143,0.42)"/><rect x="818" y="526" width="2" height="1" fill="rgba(143,143,143,0.42)"/><line x1="67" y1="526.5" x2="817" y2="526.5" stroke="rgba(143,143,143,0.42)" stroke-width="1" stroke-dasharray="1 1" stroke-dashoffset="1"/><rect x="64" y="518" width="2" height="1" fill="rgba(143,143,143,0.42)"/><rect x="818" y="518" width="2" height="1" fill="rgba(143,143,143,0.42)"/><line x1="67" y1="518.5" x2="817" y2="518.5" stroke="rgba(143,143,143,0.42)" stroke-width="1" stroke-dasharray="1 1" stroke-dashoffset="1"/><rect x="64" y="510" width="2" height="1" fill="rgba(222,79,79,0.45)"/><rect x="818" y="510" width="2" height="1" fill="rgba(222,79,79,0.45)"/><line x1="67" y1="510.5" x2="817" y2="510.5" stroke="rgba(222,79,79,0.45)" stroke-width="1" stroke-dasharray="1 1" stroke-dashoffset="0"/><rect x="64" y="502" width="2" height="1" fill="rgba(143,143,143,0.42)"/><rect x="818" y="502" width="2" height="1" fill="rgba(143,143,143,0.42)"/><line x1="67" y1="502.5" x2="817" y2="502.5" stroke="rgba(143,143,143,0.42)" stroke-width="1" stroke-dasharray="1 1" stroke-dashoffset="1"/><rect x="64" y="494" width="2" height="1" fill="rgba(143,143,143,0.42)"/><rect x="818" y="494" width="2" height="1" fill="rgba(143,143,143,0.42)"/><line x1="67" y1="494.5" x2="817" y2="494.5" stroke="rgba(143,143,143,0.42)" stroke-width="1" stroke-dasharray="1 1" stroke-dashoffset="1"/><rect x="64" y="486" width="2" height="1" fill="rgba(143,143,143,0.42)"/><rect x="818" y="486" width="2" height="1" fill="rgba(143,143,143,0.42)"/><line x1="67" y1="486.5" x2="817" y2="486.5" stroke="rgba(143,143,143,0.42)" stroke-width="1" stroke-dasharray="1 1" stroke-dashoffset="1"/><rect x="64" y="477" width="2" height="1" fill="rgba(143,143,143,0.42)"/><rect x="818" y="477" width="2" height="1" fill="rgba(143,143,143,0.42)"/><line x1="67" y1="477.5" x2="817" y2="477.5" stroke="rgba(143,143,143,0.42)" stroke-width="1" stroke-dasharray="1 1" stroke-dashoffset="1"/><rect x="64" y="469" width="2" height="1" fill="rgba(222,79,79,0.45)"/><rect x="818" y="469" width="2" height="1" fill="rgba(222,79,79,0.45)"/><line x1="67" y1="469.5" x2="817" y2="469.5" stroke="rgba(222,79,79,0.45)" stroke-width="1" stroke-dasharray="1 1" stroke-dashoffset="0"/><rect x="64" y="461" width="2" height="1" fill="rgba(143,143,143,0.42)"/><rect x="818" y="461" width="2" height="1" fill="rgba(143,143,143,0.42)"/><line x1="67" y1="461.5" x2="817" y2="461.5" stroke="rgba(143,143,143,0.42)" stroke-width="1" stroke-dasharray="1 1" stroke-dashoffset="1"/><rect x="64" y="453" width="2" height="1" fill="rgba(143,143,143,0.42)"/><rect x="818" y="453" width="2" height="1" fill="rgba(143,143,143,0.42)"/><line x1="67" y1="453.5" x2="817" y2="453.5" stroke="rgba(143,143,143,0.42)" stroke-width="1" stroke-dasharray="1 1" stroke-dashoffset="1"/><rect x="64" y="445" width="2" height="1" fill="rgba(143,143,143,0.42)"/><rect x="818" y="445" width="2" height="1" fill="rgba(143,143,143,0.42)"/><line x1="67" y1="445.5" x2="817" y2="445.5" stroke="rgba(143,143,143,0.42)" stroke-width="1" stroke-dasharray="1 1" stroke-dashoffset="1"/><rect x="64" y="437" width="2" height="1" fill="rgba(143,143,143,0.42)"/><rect x="818" y="437" width="2" height="1" fill="rgba(143,143,143,0.42)"/><line x1="67" y1="437.5" x2="817" y2="437.5" stroke="rgba(143,143,143,0.42)" stroke-width="1" stroke-dasharray="1 1" stroke-dashoffset="1"/><rect x="64" y="429" width="2" height="1" fill="rgba(222,79,79,0.45)"/><rect x="818" y="429" width="2" height="1" fill="rgba(222,79,79,0.45)"/><line x1="67" y1="429.5" x2="817" y2="429.5" stroke="rgba(222,79,79,0.45)" stroke-width="1" stroke-dasharray="1 1" stroke-dashoffset="0"/><rect x="64" y="421" width="2" height="1" fill="rgba(143,143,143,0.42)"/><rect x="818" y="421" width="2" height="1" fill="rgba(143,143,143,0.42)"/><line x1="67" y1="421.5" x2="817" y2="421.5" stroke="rgba(143,143,143,0.42)" stroke-width="1" stroke-dasharray="1 1" stroke-dashoffset="1"/><rect x="64" y="412" width="2" height="1" fill="rgba(143,143,143,0.42)"/><rect x="818" y="412" width="2" height="1" fill="rgba(143,143,143,0.42)"/><line x1="67" y1="412.5" x2="817" y2="412.5" stroke="rgba(143,143,143,0.42)" stroke-width="1" stroke-dasharray="1 1" stroke-dashoffset="1"/><rect x="64" y="404" width="2" height="1" fill="rgba(143,143,143,0.42)"/><rect x="818" y="404" width="2" height="1" fill="rgba(143,143,143,0.42)"/><line x1="67" y1="404.5" x2="817" y2="404.5" stroke="rgba(143,143,143,0.42)" stroke-width="1" stroke-dasharray="1 1" stroke-dashoffset="1"/><rect x="64" y="396" width="2" height="1" fill="rgba(143,143,143,0.42)"/><rect x="818" y="396" width="2" height="1" fill="rgba(143,143,143,0.42)"/><line x1="67" y1="396.5" x2="817" y2="396.5" stroke="rgba(143,143,143,0.42)" stroke-width="1" stroke-dasharray="1 1" stroke-dashoffset="1"/><rect x="64" y="388" width="2" height="1" fill="rgba(222,79,79,0.45)"/><rect x="818" y="388" width="2" height="1" fill="rgba(222,79,79,0.45)"/><line x1="67" y1="388.5" x2="817" y2="388.5" stroke="rgba(222,79,79,0.45)" stroke-width="1" stroke-dasharray="1 1" stroke-dashoffset="0"/><rect x="64" y="380" width="2" height="1" fill="rgba(143,143,143,0.42)"/><rect x="818" y="380" width="2" height="1" fill="rgba(143,143,143,0.42)"/><line x1="67" y1="380.5" x2="817" y2="380.5" stroke="rgba(143,143,143,0.42)" stroke-width="1" stroke-dasharray="1 1" stroke-dashoffset="1"/><rect x="64" y="372" width="2" height="1" fill="rgba(143,143,143,0.42)"/><rect x="818" y="372" width="2" height="1" fill="rgba(143,143,143,0.42)"/><line x1="67" y1="372.5" x2="817" y2="372.5" stroke="rgba(143,143,143,0.42)" stroke-width="1" stroke-dasharray="1 1" stroke-dashoffset="1"/><rect x="64" y="364" width="2" height="1" fill="rgba(143,143,143,0.42)"/><rect x="818" y="364" width="2" height="1" fill="rgba(143,143,143,0.42)"/><line x1="67" y1="364.5" x2="817" y2="364.5" stroke="rgba(143,143,143,0.42)" stroke-width="1" stroke-dasharray="1 1" stroke-dashoffset="1"/><rect x="64" y="355" width="2" height="1" fill="rgba(143,143,143,0.42)"/><rect x="818" y="355" width="2" height="1" fill="rgba(143,143,143,0.42)"/><line x1="67" y1="355.5" x2="817" y2="355.5" stroke="rgba(143,143,143,0.42)" stroke-width="1" stroke-dasharray="1 1" stroke-dashoffset="1"/><rect x="64" y="347" width="2" height="1" fill="rgba(222,79,79,0.45)"/><rect x="818" y="347" width="2" height="1" fill="rgba(222,79,79,0.45)"/><line x1="67" y1="347.5" x2="817" y2="347.5" stroke="rgba(222,79,79,0.45)" stroke-width="1" stroke-dasharray="1 1" stroke-dashoffset="0"/><rect x="64" y="339" width="2" height="1" fill="rgba(143,143,143,0.42)"/><rect x="818" y="339" width="2" height="1" fill="rgba(143,143,143,0.42)"/><line x1="67" y1="339.5" x2="817" y2="339.5" stroke="rgba(143,143,143,0.42)" stroke-width="1" stroke-dasharray="1 1" stroke-dashoffset="1"/><rect x="64" y="331" width="2" height="1" fill="rgba(143,143,143,0.42)"/><rect x="818" y="331" width="2" height="1" fill="rgba(143,143,143,0.42)"/><line x1="67" y1="331.5" x2="817" y2="331.5" stroke="rgba(143,143,143,0.42)" stroke-width="1" stroke-dasharray="1 1" stroke-dashoffset="1"/><rect x="64" y="323" width="2" height="1" fill="rgba(143,143,143,0.42)"/><rect x="818" y="323" width="2" height="1" fill="rgba(143,143,143,0.42)"/><line x1="67" y1="323.5" x2="817" y2="323.5" stroke="rgba(143,143,143,0.42)" stroke-width="1" stroke-dasharray="1 1" stroke-dashoffset="1"/><rect x="64" y="315" width="2" height="1" fill="rgba(143,143,143,0.42)"/><rect x="818" y="315" width="2" height="1" fill="rgba(143,143,143,0.42)"/><line x1="67" y1="315.5" x2="817" y2="315.5" stroke="rgba(143,143,143,0.42)" stroke-width="1" stroke-dasharray="1 1" stroke-dashoffset="1"/><rect x="64" y="307" width="2" height="1" fill="rgba(222,79,79,0.45)"/><rect x="818" y="307" width="2" height="1" fill="rgba(222,79,79,0.45)"/><line x1="67" y1="307.5" x2="817" y2="307.5" stroke="rgba(222,79,79,0.45)" stroke-width="1" stroke-dasharray="1 1" stroke-dashoffset="0"/><rect x="64" y="298" width="2" height="1" fill="rgba(143,143,143,0.42)"/><rect x="818" y="298" width="2" height="1" fill="rgba(143,143,143,0.42)"/><line x1="67" y1="298.5" x2="817" y2="298.5" stroke="rgba(143,143,143,0.42)" stroke-width="1" stroke-dasharray="1 1" stroke-dashoffset="1"/><rect x="64" y="290" width="2" height="1" fill="rgba(143,143,143,0.42)"/><rect x="818" y="290" width="2" height="1" fill="rgba(143,143,143,0.42)"/><line x1="67" y1="290.5" x2="817" y2="290.5" stroke="rgba(143,143,143,0.42)" stroke-width="1" stroke-dasharray="1 1" stroke-dashoffset="1"/><rect x="64" y="282" width="2" height="1" fill="rgba(143,143,143,0.42)"/><rect x="818" y="282" width="2" height="1" fill="rgba(143,143,143,0.42)"/><line x1="67" y1="282.5" x2="817" y2="282.5" stroke="rgba(143,143,143,0.42)" stroke-width="1" stroke-dasharray="1 1" stroke-dashoffset="1"/><rect x="64" y="274" width="2" height="1" fill="rgba(143,143,143,0.42)"/><rect x="818" y="274" width="2" height="1" fill="rgba(143,143,143,0.42)"/><line x1="67" y1="274.5" x2="817" y2="274.5" stroke="rgba(143,143,143,0.42)" stroke-width="1" stroke-dasharray="1 1" stroke-dashoffset="1"/><rect x="64" y="266" width="2" height="1" fill="rgba(222,79,79,0.45)"/><rect x="818" y="266" width="2" height="1" fill="rgba(222,79,79,0.45)"/><line x1="67" y1="266.5" x2="817" y2="266.5" stroke="rgba(222,79,79,0.45)" stroke-width="1" stroke-dasharray="1 1" stroke-dashoffset="0"/><rect x="64" y="258" width="2" height="1" fill="rgba(143,143,143,0.42)"/><rect x="818" y="258" width="2" height="1" fill="rgba(143,143,143,0.42)"/><line x1="67" y1="258.5" x2="817" y2="258.5" stroke="rgba(143,143,143,0.42)" stroke-width="1" stroke-dasharray="1 1" stroke-dashoffset="1"/><rect x="64" y="250" width="2" height="1" fill="rgba(143,143,143,0.42)"/><rect x="818" y="250" width="2" height="1" fill="rgba(143,143,143,0.42)"/><line x1="67" y1="250.5" x2="817" y2="250.5" stroke="rgba(143,143,143,0.42)" stroke-width="1" stroke-dasharray="1 1" stroke-dashoffset="1"/><rect x="64" y="241" width="2" height="1" fill="rgba(143,143,143,0.42)"/><rect x="818" y="241" width="2" height="1" fill="rgba(143,143,143,0.42)"/><line x1="67" y1="241.5" x2="817" y2="241.5" stroke="rgba(143,143,143,0.42)" stroke-width="1" stroke-dasharray="1 1" stroke-dashoffset="1"/><rect x="64" y="233" width="2" height="1" fill="rgba(143,143,143,0.42)"/><rect x="818" y="233" width="2" height="1" fill="rgba(143,143,143,0.42)"/><line x1="67" y1="233.5" x2="817" y2="233.5" stroke="rgba(143,143,143,0.42)" stroke-width="1" stroke-dasharray="1 1" stroke-dashoffset="1"/><rect x="64" y="225" width="2" height="1" fill="rgba(222,79,79,0.45)"/><rect x="818" y="225" width="2" height="1" fill="rgba(222,79,79,0.45)"/><line x1="67" y1="225.5" x2="817" y2="225.5" stroke="rgba(222,79,79,0.45)" stroke-width="1" stroke-dasharray="1 1" stroke-dashoffset="0"/><rect x="64" y="217" width="2" height="1" fill="rgba(143,143,143,0.42)"/><rect x="818" y="217" width="2" height="1" fill="rgba(143,143,143,0.42)"/><line x1="67" y1="217.5" x2="817" y2="217.5" stroke="rgba(143,143,143,0.42)" stroke-width="1" stroke-dasharray="1 1" stroke-dashoffset="1"/><rect x="64" y="209" width="2" height="1" fill="rgba(143,143,143,0.42)"/><rect x="818" y="209" width="2" height="1" fill="rgba(143,143,143,0.42)"/><line x1="67" y1="209.5" x2="817" y2="209.5" stroke="rgba(143,143,143,0.42)" stroke-width="1" stroke-dasharray="1 1" stroke-dashoffset="1"/><rect x="64" y="201" width="2" height="1" fill="rgba(143,143,143,0.42)"/><rect x="818" y="201" width="2" height="1" fill="rgba(143,143,143,0.42)"/><line x1="67" y1="201.5" x2="817" y2="201.5" stroke="rgba(143,143,143,0.42)" stroke-width="1" stroke-dasharray="1 1" stroke-dashoffset="1"/><rect x="64" y="193" width="2" height="1" fill="rgba(143,143,143,0.42)"/><rect x="818" y="193" width="2" height="1" fill="rgba(143,143,143,0.42)"/><line x1="67" y1="193.5" x2="817" y2="193.5" stroke="rgba(143,143,143,0.42)" stroke-width="1" stroke-dasharray="1 1" stroke-dashoffset="1"/><rect x="64" y="184" width="2" height="1" fill="rgba(222,79,79,0.45)"/><rect x="818" y="184" width="2" height="1" fill="rgba(222,79,79,0.45)"/><line x1="67" y1="184.5" x2="817" y2="184.5" stroke="rgba(222,79,79,0.45)" stroke-width="1" stroke-dasharray="1 1" stroke-dashoffset="0"/><rect x="64" y="176" width="2" height="1" fill="rgba(143,143,143,0.42)"/><rect x="818" y="176" width="2" height="1" fill="rgba(143,143,143,0.42)"/><line x1="67" y1="176.5" x2="817" y2="176.5" stroke="rgba(143,143,143,0.42)" stroke-width="1" stroke-dasharray="1 1" stroke-dashoffset="1"/><rect x="64" y="168" width="2" height="1" fill="rgba(143,143,143,0.42)"/><rect x="818" y="168" width="2" height="1" fill="rgba(143,143,143,0.42)"/><line x1="67" y1="168.5" x2="817" y2="168.5" stroke="rgba(143,143,143,0.42)" stroke-width="1" stroke-dasharray="1 1" stroke-dashoffset="1"/><rect x="64" y="160" width="2" height="1" fill="rgba(143,143,143,0.42)"/><rect x="818" y="160" width="2" height="1" fill="rgba(143,143,143,0.42)"/><line x1="67" y1="160.5" x2="817" y2="160.5" stroke="rgba(143,143,143,0.42)" stroke-width="1" stroke-dasharray="1 1" stroke-dashoffset="1"/><rect x="64" y="152" width="2" height="1" fill="rgba(143,143,143,0.42)"/><rect x="818" y="152" width="2" height="1" fill="rgba(143,143,143,0.42)"/><line x1="67" y1="152.5" x2="817" y2="152.5" stroke="rgba(143,143,143,0.42)" stroke-width="1" stroke-dasharray="1 1" stroke-dashoffset="1"/><rect x="64" y="144" width="2" height="1" fill="rgba(222,79,79,0.45)"/><rect x="818" y="144" width="2" height="1" fill="rgba(222,79,79,0.45)"/><line x1="67" y1="144.5" x2="817" y2="144.5" stroke="rgba(222,79,79,0.45)" stroke-width="1" stroke-dasharray="1 1" stroke-dashoffset="0"/><rect x="64" y="136" width="2" height="1" fill="rgba(143,143,143,0.42)"/><rect x="818" y="136" width="2" height="1" fill="rgba(143,143,143,0.42)"/><line x1="67" y1="136.5" x2="817" y2="136.5" stroke="rgba(143,143,143,0.42)" stroke-width="1" stroke-dasharray="1 1" stroke-dashoffset="1"/><rect x="64" y="127" width="2" height="1" fill="rgba(143,143,143,0.42)"/><rect x="818" y="127" width="2" height="1" fill="rgba(143,143,143,0.42)"/><line x1="67" y1="127.5" x2="817" y2="127.5" stroke="rgba(143,143,143,0.42)" stroke-width="1" stroke-dasharray="1 1" stroke-dashoffset="1"/><rect x="64" y="119" width="2" height="1" fill="rgba(143,143,143,0.42)"/><rect x="818" y="119" width="2" height="1" fill="rgba(143,143,143,0.42)"/><line x1="67" y1="119.5" x2="817" y2="119.5" stroke="rgba(143,143,143,0.42)" stroke-width="1" stroke-dasharray="1 1" stroke-dashoffset="1"/><rect x="64" y="111" width="2" height="1" fill="rgba(143,143,143,0.42)"/><rect x="818" y="111" width="2" height="1" fill="rgba(143,143,143,0.42)"/><line x1="67" y1="111.5" x2="817" y2="111.5" stroke="rgba(143,143,143,0.42)" stroke-width="1" stroke-dasharray="1 1" stroke-dashoffset="1"/><rect x="64" y="103" width="2" height="1" fill="rgba(222,79,79,0.45)"/><rect x="818" y="103" width="2" height="1" fill="rgba(222,79,79,0.45)"/><line x1="67" y1="103.5" x2="817" y2="103.5" stroke="rgba(222,79,79,0.45)" stroke-width="1" stroke-dasharray="1 1" stroke-dashoffset="0"/><rect x="64" y="95" width="2" height="1" fill="rgba(143,143,143,0.42)"/><rect x="818" y="95" width="2" height="1" fill="rgba(143,143,143,0.42)"/><line x1="67" y1="95.5" x2="817" y2="95.5" stroke="rgba(143,143,143,0.42)" stroke-width="1" stroke-dasharray="1 1" stroke-dashoffset="1"/><rect x="64" y="87" width="2" height="1" fill="rgba(143,143,143,0.42)"/><rect x="818" y="87" width="2" height="1" fill="rgba(143,143,143,0.42)"/><line x1="67" y1="87.5" x2="817" y2="87.5" stroke="rgba(143,143,143,0.42)" stroke-width="1" stroke-dasharray="1 1" stroke-dashoffset="1"/><rect x="64" y="79" width="2" height="1" fill="rgba(143,143,143,0.42)"/><rect x="818" y="79" width="2" height="1" fill="rgba(143,143,143,0.42)"/><line x1="67" y1="79.5" x2="817" y2="79.5" stroke="rgba(143,143,143,0.42)" stroke-width="1" stroke-dasharray="1 1" stroke-dashoffset="1"/><rect x="64" y="70" width="2" height="1" fill="rgba(143,143,143,0.42)"/><rect x="818" y="70" width="2" height="1" fill="rgba(143,143,143,0.42)"/><line x1="67" y1="70.5" x2="817" y2="70.5" stroke="rgba(143,143,143,0.42)" stroke-width="1" stroke-dasharray="1 1" stroke-dashoffset="1"/><rect x="64" y="62" width="2" height="1" fill="rgba(222,79,79,0.45)"/><rect x="818" y="62" width="2" height="1" fill="rgba(222,79,79,0.45)"/><line x1="67" y1="62.5" x2="817" y2="62.5" stroke="rgba(222,79,79,0.45)" stroke-width="1" stroke-dasharray="1 1" stroke-dashoffset="0"/><rect x="64" y="54" width="2" height="1" fill="rgba(143,143,143,0.42)"/><rect x="818" y="54" width="2" height="1" fill="rgba(143,143,143,0.42)"/><line x1="67" y1="54.5" x2="817" y2="54.5" stroke="rgba(143,143,143,0.42)" stroke-width="1" stroke-dasharray="1 1" stroke-dashoffset="1"/><rect x="64" y="46" width="2" height="1" fill="rgba(143,143,143,0.42)"/><rect x="818" y="46" width="2" height="1" fill="rgba(143,143,143,0.42)"/><line x1="67" y1="46.5" x2="817" y2="46.5" stroke="rgba(143,143,143,0.42)" stroke-width="1" stroke-dasharray="1 1" stroke-dashoffset="1"/><rect x="64" y="38" width="2" height="1" fill="rgba(143,143,143,0.42)"/><rect x="818" y="38" width="2" height="1" fill="rgba(143,143,143,0.42)"/><line x1="67" y1="38.5" x2="817" y2="38.5" stroke="rgba(143,143,143,0.42)" stroke-width="1" stroke-dasharray="1 1" stroke-dashoffset="1"/><rect x="90" y="31" width="1" height="2" fill="rgba(222,79,79,0.45)"/><rect x="90" y="734" width="1" height="3" fill="rgba(222,79,79,0.45)"/><line x1="90.5" y1="33" x2="90.5" y2="733" stroke="rgba(222,79,79,0.45)" stroke-width="1" stroke-dasharray="1 1" stroke-dashoffset="0"/><rect x="78" y="31" width="1" height="2" fill="rgba(143,143,143,0.42)"/><rect x="78" y="734" width="1" height="2" fill="rgba(143,143,143,0.42)"/><line x1="78.5" y1="33" x2="78.5" y2="733" stroke="rgba(143,143,143,0.42)" stroke-width="1" stroke-dasharray="1 1" stroke-dashoffset="0"/><rect x="114" y="31" width="1" height="2" fill="rgba(222,79,79,0.45)"/><rect x="114" y="734" width="1" height="3" fill="rgba(222,79,79,0.45)"/><line x1="114.5" y1="33" x2="114.5" y2="733" stroke="rgba(222,79,79,0.45)" stroke-width="1" stroke-dasharray="1 1" stroke-dashoffset="0"/><rect x="102" y="31" width="1" height="2" fill="rgba(143,143,143,0.42)"/><rect x="102" y="734" width="1" height="2" fill="rgba(143,143,143,0.42)"/><line x1="102.5" y1="33" x2="102.5" y2="733" stroke="rgba(143,143,143,0.42)" stroke-width="1" stroke-dasharray="1 1" stroke-dashoffset="0"/><rect x="138" y="31" width="1" height="2" fill="rgba(222,79,79,0.45)"/><rect x="138" y="734" width="1" height="3" fill="rgba(222,79,79,0.45)"/><line x1="138.5" y1="33" x2="138.5" y2="733" stroke="rgba(222,79,79,0.45)" stroke-width="1" stroke-dasharray="1 1" stroke-dashoffset="0"/><rect x="126" y="31" width="1" height="2" fill="rgba(143,143,143,0.42)"/><rect x="126" y="734" width="1" height="2" fill="rgba(143,143,143,0.42)"/><line x1="126.5" y1="33" x2="126.5" y2="733" stroke="rgba(143,143,143,0.42)" stroke-width="1" stroke-dasharray="1 1" stroke-dashoffset="0"/><rect x="162" y="31" width="1" height="2" fill="rgba(222,79,79,0.45)"/><rect x="162" y="734" width="1" height="3" fill="rgba(222,79,79,0.45)"/><line x1="162.5" y1="33" x2="162.5" y2="733" stroke="rgba(222,79,79,0.45)" stroke-width="1" stroke-dasharray="1 1" stroke-dashoffset="0"/><rect x="150" y="31" width="1" height="2" fill="rgba(143,143,143,0.42)"/><rect x="150" y="734" width="1" height="2" fill="rgba(143,143,143,0.42)"/><line x1="150.5" y1="33" x2="150.5" y2="733" stroke="rgba(143,143,143,0.42)" stroke-width="1" stroke-dasharray="1 1" stroke-dashoffset="0"/><rect x="187" y="31" width="1" height="2" fill="rgba(222,79,79,0.45)"/><rect x="187" y="734" width="1" height="3" fill="rgba(222,79,79,0.45)"/><line x1="187.5" y1="33" x2="187.5" y2="733" stroke="rgba(222,79,79,0.45)" stroke-width="1" stroke-dasharray="1 1" stroke-dashoffset="0"/><rect x="175" y="31" width="1" height="2" fill="rgba(143,143,143,0.42)"/><rect x="175" y="734" width="1" height="2" fill="rgba(143,143,143,0.42)"/><line x1="175.5" y1="33" x2="175.5" y2="733" stroke="rgba(143,143,143,0.42)" stroke-width="1" stroke-dasharray="1 1" stroke-dashoffset="0"/><rect x="211" y="31" width="1" height="2" fill="rgba(222,79,79,0.45)"/><rect x="211" y="734" width="1" height="3" fill="rgba(222,79,79,0.45)"/><line x1="211.5" y1="33" x2="211.5" y2="733" stroke="rgba(222,79,79,0.45)" stroke-width="1" stroke-dasharray="1 1" stroke-dashoffset="0"/><rect x="199" y="31" width="1" height="2" fill="rgba(143,143,143,0.42)"/><rect x="199" y="734" width="1" height="2" fill="rgba(143,143,143,0.42)"/><line x1="199.5" y1="33" x2="199.5" y2="733" stroke="rgba(143,143,143,0.42)" stroke-width="1" stroke-dasharray="1 1" stroke-dashoffset="0"/><rect x="235" y="31" width="1" height="2" fill="rgba(222,79,79,0.45)"/><rect x="235" y="734" width="1" height="3" fill="rgba(222,79,79,0.45)"/><line x1="235.5" y1="33" x2="235.5" y2="733" stroke="rgba(222,79,79,0.45)" stroke-width="1" stroke-dasharray="1 1" stroke-dashoffset="0"/><rect x="223" y="31" width="1" height="2" fill="rgba(143,143,143,0.42)"/><rect x="223" y="734" width="1" height="2" fill="rgba(143,143,143,0.42)"/><line x1="223.5" y1="33" x2="223.5" y2="733" stroke="rgba(143,143,143,0.42)" stroke-width="1" stroke-dasharray="1 1" stroke-dashoffset="0"/><rect x="259" y="31" width="1" height="2" fill="rgba(222,79,79,0.45)"/><rect x="259" y="734" width="1" height="3" fill="rgba(222,79,79,0.45)"/><line x1="259.5" y1="33" x2="259.5" y2="733" stroke="rgba(222,79,79,0.45)" stroke-width="1" stroke-dasharray="1 1" stroke-dashoffset="0"/><rect x="247" y="31" width="1" height="2" fill="rgba(143,143,143,0.42)"/><rect x="247" y="734" width="1" height="2" fill="rgba(143,143,143,0.42)"/><line x1="247.5" y1="33" x2="247.5" y2="733" stroke="rgba(143,143,143,0.42)" stroke-width="1" stroke-dasharray="1 1" stroke-dashoffset="0"/><rect x="283" y="31" width="1" height="2" fill="rgba(222,79,79,0.45)"/><rect x="283" y="734" width="1" height="3" fill="rgba(222,79,79,0.45)"/><line x1="283.5" y1="33" x2="283.5" y2="733" stroke="rgba(222,79,79,0.45)" stroke-width="1" stroke-dasharray="1 1" stroke-dashoffset="0"/><rect x="271" y="31" width="1" height="2" fill="rgba(143,143,143,0.42)"/><rect x="271" y="734" width="1" height="2" fill="rgba(143,143,143,0.42)"/><line x1="271.5" y1="33" x2="271.5" y2="733" stroke="rgba(143,143,143,0.42)" stroke-width="1" stroke-dasharray="1 1" stroke-dashoffset="0"/><rect x="308" y="31" width="1" height="2" fill="rgba(222,79,79,0.45)"/><rect x="308" y="734" width="1" height="3" fill="rgba(222,79,79,0.45)"/><line x1="308.5" y1="33" x2="308.5" y2="733" stroke="rgba(222,79,79,0.45)" stroke-width="1" stroke-dasharray="1 1" stroke-dashoffset="0"/><rect x="295" y="31" width="1" height="2" fill="rgba(143,143,143,0.42)"/><rect x="295" y="734" width="1" height="2" fill="rgba(143,143,143,0.42)"/><line x1="295.5" y1="33" x2="295.5" y2="733" stroke="rgba(143,143,143,0.42)" stroke-width="1" stroke-dasharray="1 1" stroke-dashoffset="0"/><rect x="332" y="31" width="1" height="2" fill="rgba(222,79,79,0.45)"/><rect x="332" y="734" width="1" height="3" fill="rgba(222,79,79,0.45)"/><line x1="332.5" y1="33" x2="332.5" y2="733" stroke="rgba(222,79,79,0.45)" stroke-width="1" stroke-dasharray="1 1" stroke-dashoffset="0"/><rect x="320" y="31" width="1" height="2" fill="rgba(143,143,143,0.42)"/><rect x="320" y="734" width="1" height="2" fill="rgba(143,143,143,0.42)"/><line x1="320.5" y1="33" x2="320.5" y2="733" stroke="rgba(143,143,143,0.42)" stroke-width="1" stroke-dasharray="1 1" stroke-dashoffset="0"/><rect x="356" y="31" width="1" height="2" fill="rgba(222,79,79,0.45)"/><rect x="356" y="734" width="1" height="3" fill="rgba(222,79,79,0.45)"/><line x1="356.5" y1="33" x2="356.5" y2="733" stroke="rgba(222,79,79,0.45)" stroke-width="1" stroke-dasharray="1 1" stroke-dashoffset="0"/><rect x="344" y="31" width="1" height="2" fill="rgba(143,143,143,0.42)"/><rect x="344" y="734" width="1" height="2" fill="rgba(143,143,143,0.42)"/><line x1="344.5" y1="33" x2="344.5" y2="733" stroke="rgba(143,143,143,0.42)" stroke-width="1" stroke-dasharray="1 1" stroke-dashoffset="0"/><rect x="380" y="31" width="1" height="2" fill="rgba(222,79,79,0.45)"/><rect x="380" y="734" width="1" height="3" fill="rgba(222,79,79,0.45)"/><line x1="380.5" y1="33" x2="380.5" y2="733" stroke="rgba(222,79,79,0.45)" stroke-width="1" stroke-dasharray="1 1" stroke-dashoffset="0"/><rect x="368" y="31" width="1" height="2" fill="rgba(143,143,143,0.42)"/><rect x="368" y="734" width="1" height="2" fill="rgba(143,143,143,0.42)"/><line x1="368.5" y1="33" x2="368.5" y2="733" stroke="rgba(143,143,143,0.42)" stroke-width="1" stroke-dasharray="1 1" stroke-dashoffset="0"/><rect x="404" y="31" width="1" height="2" fill="rgba(222,79,79,0.45)"/><rect x="404" y="734" width="1" height="3" fill="rgba(222,79,79,0.45)"/><line x1="404.5" y1="33" x2="404.5" y2="733" stroke="rgba(222,79,79,0.45)" stroke-width="1" stroke-dasharray="1 1" stroke-dashoffset="0"/><rect x="392" y="31" width="1" height="2" fill="rgba(143,143,143,0.42)"/><rect x="392" y="734" width="1" height="2" fill="rgba(143,143,143,0.42)"/><line x1="392.5" y1="33" x2="392.5" y2="733" stroke="rgba(143,143,143,0.42)" stroke-width="1" stroke-dasharray="1 1" stroke-dashoffset="0"/><rect x="429" y="31" width="1" height="2" fill="rgba(222,79,79,0.45)"/><rect x="429" y="734" width="1" height="3" fill="rgba(222,79,79,0.45)"/><line x1="429.5" y1="33" x2="429.5" y2="733" stroke="rgba(222,79,79,0.45)" stroke-width="1" stroke-dasharray="1 1" stroke-dashoffset="0"/><rect x="417" y="31" width="1" height="2" fill="rgba(143,143,143,0.42)"/><rect x="417" y="734" width="1" height="2" fill="rgba(143,143,143,0.42)"/><line x1="417.5" y1="33" x2="417.5" y2="733" stroke="rgba(143,143,143,0.42)" stroke-width="1" stroke-dasharray="1 1" stroke-dashoffset="0"/><rect x="453" y="31" width="1" height="2" fill="rgba(222,79,79,0.45)"/><rect x="453" y="734" width="1" height="3" fill="rgba(222,79,79,0.45)"/><line x1="453.5" y1="33" x2="453.5" y2="733" stroke="rgba(222,79,79,0.45)" stroke-width="1" stroke-dasharray="1 1" stroke-dashoffset="0"/><rect x="441" y="31" width="1" height="2" fill="rgba(143,143,143,0.42)"/><rect x="441" y="734" width="1" height="2" fill="rgba(143,143,143,0.42)"/><line x1="441.5" y1="33" x2="441.5" y2="733" stroke="rgba(143,143,143,0.42)" stroke-width="1" stroke-dasharray="1 1" stroke-dashoffset="0"/><rect x="477" y="31" width="1" height="2" fill="rgba(222,79,79,0.45)"/><rect x="477" y="734" width="1" height="3" fill="rgba(222,79,79,0.45)"/><line x1="477.5" y1="33" x2="477.5" y2="733" stroke="rgba(222,79,79,0.45)" stroke-width="1" stroke-dasharray="1 1" stroke-dashoffset="0"/><rect x="465" y="31" width="1" height="2" fill="rgba(143,143,143,0.42)"/><rect x="465" y="734" width="1" height="2" fill="rgba(143,143,143,0.42)"/><line x1="465.5" y1="33" x2="465.5" y2="733" stroke="rgba(143,143,143,0.42)" stroke-width="1" stroke-dasharray="1 1" stroke-dashoffset="0"/><rect x="501" y="31" width="1" height="2" fill="rgba(222,79,79,0.45)"/><rect x="501" y="734" width="1" height="3" fill="rgba(222,79,79,0.45)"/><line x1="501.5" y1="33" x2="501.5" y2="733" stroke="rgba(222,79,79,0.45)" stroke-width="1" stroke-dasharray="1 1" stroke-dashoffset="0"/><rect x="489" y="31" width="1" height="2" fill="rgba(143,143,143,0.42)"/><rect x="489" y="734" width="1" height="2" fill="rgba(143,143,143,0.42)"/><line x1="489.5" y1="33" x2="489.5" y2="733" stroke="rgba(143,143,143,0.42)" stroke-width="1" stroke-dasharray="1 1" stroke-dashoffset="0"/><rect x="525" y="31" width="1" height="2" fill="rgba(222,79,79,0.45)"/><rect x="525" y="734" width="1" height="3" fill="rgba(222,79,79,0.45)"/><line x1="525.5" y1="33" x2="525.5" y2="733" stroke="rgba(222,79,79,0.45)" stroke-width="1" stroke-dasharray="1 1" stroke-dashoffset="0"/><rect x="513" y="31" width="1" height="2" fill="rgba(143,143,143,0.42)"/><rect x="513" y="734" width="1" height="2" fill="rgba(143,143,143,0.42)"/><line x1="513.5" y1="33" x2="513.5" y2="733" stroke="rgba(143,143,143,0.42)" stroke-width="1" stroke-dasharray="1 1" stroke-dashoffset="0"/><rect x="550" y="31" width="1" height="2" fill="rgba(222,79,79,0.45)"/><rect x="550" y="734" width="1" height="3" fill="rgba(222,79,79,0.45)"/><line x1="550.5" y1="33" x2="550.5" y2="733" stroke="rgba(222,79,79,0.45)" stroke-width="1" stroke-dasharray="1 1" stroke-dashoffset="0"/><rect x="538" y="31" width="1" height="2" fill="rgba(143,143,143,0.42)"/><rect x="538" y="734" width="1" height="2" fill="rgba(143,143,143,0.42)"/><line x1="538.5" y1="33" x2="538.5" y2="733" stroke="rgba(143,143,143,0.42)" stroke-width="1" stroke-dasharray="1 1" stroke-dashoffset="0"/><rect x="574" y="31" width="1" height="2" fill="rgba(222,79,79,0.45)"/><rect x="574" y="734" width="1" height="3" fill="rgba(222,79,79,0.45)"/><line x1="574.5" y1="33" x2="574.5" y2="733" stroke="rgba(222,79,79,0.45)" stroke-width="1" stroke-dasharray="1 1" stroke-dashoffset="0"/><rect x="562" y="31" width="1" height="2" fill="rgba(143,143,143,0.42)"/><rect x="562" y="734" width="1" height="2" fill="rgba(143,143,143,0.42)"/><line x1="562.5" y1="33" x2="562.5" y2="733" stroke="rgba(143,143,143,0.42)" stroke-width="1" stroke-dasharray="1 1" stroke-dashoffset="0"/><rect x="598" y="31" width="1" height="2" fill="rgba(222,79,79,0.45)"/><rect x="598" y="734" width="1" height="3" fill="rgba(222,79,79,0.45)"/><line x1="598.5" y1="33" x2="598.5" y2="733" stroke="rgba(222,79,79,0.45)" stroke-width="1" stroke-dasharray="1 1" stroke-dashoffset="0"/><rect x="586" y="31" width="1" height="2" fill="rgba(143,143,143,0.42)"/><rect x="586" y="734" width="1" height="2" fill="rgba(143,143,143,0.42)"/><line x1="586.5" y1="33" x2="586.5" y2="733" stroke="rgba(143,143,143,0.42)" stroke-width="1" stroke-dasharray="1 1" stroke-dashoffset="0"/><rect x="622" y="31" width="1" height="2" fill="rgba(222,79,79,0.45)"/><rect x="622" y="734" width="1" height="3" fill="rgba(222,79,79,0.45)"/><line x1="622.5" y1="33" x2="622.5" y2="733" stroke="rgba(222,79,79,0.45)" stroke-width="1" stroke-dasharray="1 1" stroke-dashoffset="0"/><rect x="610" y="31" width="1" height="2" fill="rgba(143,143,143,0.42)"/><rect x="610" y="734" width="1" height="2" fill="rgba(143,143,143,0.42)"/><line x1="610.5" y1="33" x2="610.5" y2="733" stroke="rgba(143,143,143,0.42)" stroke-width="1" stroke-dasharray="1 1" stroke-dashoffset="0"/><rect x="646" y="31" width="1" height="2" fill="rgba(222,79,79,0.45)"/><rect x="646" y="734" width="1" height="3" fill="rgba(222,79,79,0.45)"/><line x1="646.5" y1="33" x2="646.5" y2="733" stroke="rgba(222,79,79,0.45)" stroke-width="1" stroke-dasharray="1 1" stroke-dashoffset="0"/><rect x="634" y="31" width="1" height="2" fill="rgba(143,143,143,0.42)"/><rect x="634" y="734" width="1" height="2" fill="rgba(143,143,143,0.42)"/><line x1="634.5" y1="33" x2="634.5" y2="733" stroke="rgba(143,143,143,0.42)" stroke-width="1" stroke-dasharray="1 1" stroke-dashoffset="0"/><rect x="671" y="31" width="1" height="2" fill="rgba(222,79,79,0.45)"/><rect x="671" y="734" width="1" height="3" fill="rgba(222,79,79,0.45)"/><line x1="671.5" y1="33" x2="671.5" y2="733" stroke="rgba(222,79,79,0.45)" stroke-width="1" stroke-dasharray="1 1" stroke-dashoffset="0"/><rect x="658" y="31" width="1" height="2" fill="rgba(143,143,143,0.42)"/><rect x="658" y="734" width="1" height="2" fill="rgba(143,143,143,0.42)"/><line x1="658.5" y1="33" x2="658.5" y2="733" stroke="rgba(143,143,143,0.42)" stroke-width="1" stroke-dasharray="1 1" stroke-dashoffset="0"/><rect x="695" y="31" width="1" height="2" fill="rgba(222,79,79,0.45)"/><rect x="695" y="734" width="1" height="3" fill="rgba(222,79,79,0.45)"/><line x1="695.5" y1="33" x2="695.5" y2="733" stroke="rgba(222,79,79,0.45)" stroke-width="1" stroke-dasharray="1 1" stroke-dashoffset="0"/><rect x="683" y="31" width="1" height="2" fill="rgba(143,143,143,0.42)"/><rect x="683" y="734" width="1" height="2" fill="rgba(143,143,143,0.42)"/><line x1="683.5" y1="33" x2="683.5" y2="733" stroke="rgba(143,143,143,0.42)" stroke-width="1" stroke-dasharray="1 1" stroke-dashoffset="0"/><rect x="719" y="31" width="1" height="2" fill="rgba(222,79,79,0.45)"/><rect x="719" y="734" width="1" height="3" fill="rgba(222,79,79,0.45)"/><line x1="719.5" y1="33" x2="719.5" y2="733" stroke="rgba(222,79,79,0.45)" stroke-width="1" stroke-dasharray="1 1" stroke-dashoffset="0"/><rect x="707" y="31" width="1" height="2" fill="rgba(143,143,143,0.42)"/><rect x="707" y="734" width="1" height="2" fill="rgba(143,143,143,0.42)"/><line x1="707.5" y1="33" x2="707.5" y2="733" stroke="rgba(143,143,143,0.42)" stroke-width="1" stroke-dasharray="1 1" stroke-dashoffset="0"/><rect x="743" y="31" width="1" height="2" fill="rgba(222,79,79,0.45)"/><rect x="743" y="734" width="1" height="3" fill="rgba(222,79,79,0.45)"/><line x1="743.5" y1="33" x2="743.5" y2="733" stroke="rgba(222,79,79,0.45)" stroke-width="1" stroke-dasharray="1 1" stroke-dashoffset="0"/><rect x="731" y="31" width="1" height="2" fill="rgba(143,143,143,0.42)"/><rect x="731" y="734" width="1" height="2" fill="rgba(143,143,143,0.42)"/><line x1="731.5" y1="33" x2="731.5" y2="733" stroke="rgba(143,143,143,0.42)" stroke-width="1" stroke-dasharray="1 1" stroke-dashoffset="0"/><rect x="767" y="31" width="1" height="2" fill="rgba(222,79,79,0.45)"/><rect x="767" y="734" width="1" height="3" fill="rgba(222,79,79,0.45)"/><line x1="767.5" y1="33" x2="767.5" y2="733" stroke="rgba(222,79,79,0.45)" stroke-width="1" stroke-dasharray="1 1" stroke-dashoffset="0"/><rect x="755" y="31" width="1" height="2" fill="rgba(143,143,143,0.42)"/><rect x="755" y="734" width="1" height="2" fill="rgba(143,143,143,0.42)"/><line x1="755.5" y1="33" x2="755.5" y2="733" stroke="rgba(143,143,143,0.42)" stroke-width="1" stroke-dasharray="1 1" stroke-dashoffset="0"/><rect x="792" y="31" width="1" height="2" fill="rgba(222,79,79,0.45)"/><rect x="792" y="734" width="1" height="3" fill="rgba(222,79,79,0.45)"/><line x1="792.5" y1="33" x2="792.5" y2="733" stroke="rgba(222,79,79,0.45)" stroke-width="1" stroke-dasharray="1 1" stroke-dashoffset="0"/><rect x="779" y="31" width="1" height="2" fill="rgba(143,143,143,0.42)"/><rect x="779" y="734" width="1" height="2" fill="rgba(143,143,143,0.42)"/><line x1="779.5" y1="33" x2="779.5" y2="733" stroke="rgba(143,143,143,0.42)" stroke-width="1" stroke-dasharray="1 1" stroke-dashoffset="0"/><rect x="804" y="31" width="1" height="2" fill="rgba(143,143,143,0.42)"/><rect x="804" y="734" width="1" height="2" fill="rgba(143,143,143,0.42)"/><line x1="804.5" y1="33" x2="804.5" y2="733" stroke="rgba(143,143,143,0.42)" stroke-width="1" stroke-dasharray="1 1" stroke-dashoffset="0"/>
<rect x="66" y="31" width="1" height="706" fill="#1f1f1f"/>
<rect x="63" y="733" width="758" height="1" fill="#1f1f1f"/>
<polygon points="63.5,31 66.5,26 69.5,31" fill="#801f1f" shape-rendering="auto"/>
<polygon points="821,730 826,733.5 821,737" fill="#801f1f" shape-rendering="auto"/>
<g shape-rendering="auto"><text transform="translate(60.5,717.7) scale(1,1.1)" font-size="10.4" text-anchor="end" fill="#000">7</text><text transform="translate(60.5,676.7) scale(1,1.1)" font-size="10.4" text-anchor="end" fill="#000">8</text><text transform="translate(60.5,635.7) scale(1,1.1)" font-size="10.4" text-anchor="end" fill="#000">9</text><text transform="translate(60.5,594.7) scale(1,1.1)" font-size="10.4" text-anchor="end" fill="#000">10</text><text transform="translate(60.5,554.7) scale(1,1.1)" font-size="10.4" text-anchor="end" fill="#000">11</text><text transform="translate(60.5,513.7) scale(1,1.1)" font-size="10.4" text-anchor="end" fill="#000">12</text><text transform="translate(60.5,472.7) scale(1,1.1)" font-size="10.4" text-anchor="end" fill="#000">13</text><text transform="translate(60.5,432.7) scale(1,1.1)" font-size="10.4" text-anchor="end" fill="#000">14</text><text transform="translate(60.5,391.7) scale(1,1.1)" font-size="10.4" text-anchor="end" fill="#000">15</text><text transform="translate(60.5,350.7) scale(1,1.1)" font-size="10.4" text-anchor="end" fill="#000">16</text><text transform="translate(60.5,310.7) scale(1,1.1)" font-size="10.4" text-anchor="end" fill="#000">17</text><text transform="translate(60.5,269.7) scale(1,1.1)" font-size="10.4" text-anchor="end" fill="#000">18</text><text transform="translate(60.5,228.7) scale(1,1.1)" font-size="10.4" text-anchor="end" fill="#000">19</text><text transform="translate(60.5,187.7) scale(1,1.1)" font-size="10.4" text-anchor="end" fill="#000">20</text><text transform="translate(60.5,147.7) scale(1,1.1)" font-size="10.4" text-anchor="end" fill="#000">21</text><text transform="translate(60.5,106.7) scale(1,1.1)" font-size="10.4" text-anchor="end" fill="#000">22</text><text transform="translate(60.5,65.7) scale(1,1.1)" font-size="10.4" text-anchor="end" fill="#000">23</text></g>
<g shape-rendering="auto"><text transform="translate(103.1,746) scale(1,1.1)" font-size="10.4" text-anchor="middle" fill="#000">Wed</text><text transform="translate(151.5,746) scale(1,1.1)" font-size="10.4" text-anchor="middle" fill="#000">Fri</text><text transform="translate(199.9,746) scale(1,1.1)" font-size="10.4" text-anchor="middle" fill="#000">Sun</text><text transform="translate(248.3,746) scale(1,1.1)" font-size="10.4" text-anchor="middle" fill="#000">Tue</text><text transform="translate(296.7,746) scale(1,1.1)" font-size="10.4" text-anchor="middle" fill="#000">Thu</text><text transform="translate(345.1,746) scale(1,1.1)" font-size="10.4" text-anchor="middle" fill="#000">Sat</text><text transform="translate(393.5,746) scale(1,1.1)" font-size="10.4" text-anchor="middle" fill="#000">Mon</text><text transform="translate(441.9,746) scale(1,1.1)" font-size="10.4" text-anchor="middle" fill="#000">Wed</text><text transform="translate(490.3,746) scale(1,1.1)" font-size="10.4" text-anchor="middle" fill="#000">Fri</text><text transform="translate(538.7,746) scale(1,1.1)" font-size="10.4" text-anchor="middle" fill="#000">Sun</text><text transform="translate(587.1,746) scale(1,1.1)" font-size="10.4" text-anchor="middle" fill="#000">Tue</text><text transform="translate(635.5,746) scale(1,1.1)" font-size="10.4" text-anchor="middle" fill="#000">Thu</text><text transform="translate(683.9,746) scale(1,1.1)" font-size="10.4" text-anchor="middle" fill="#000">Sat</text><text transform="translate(732.3,746) scale(1,1.1)" font-size="10.4" text-anchor="middle" fill="#000">Mon</text><text transform="translate(780.7,746) scale(1,1.1)" font-size="10.4" text-anchor="middle" fill="#000">Wed</text></g>
<text transform="translate(442.3,18) scale(1,1.06)" font-size="13.33" text-anchor="middle" fill="#000">3.5m Tel. Temperatures</text>
<text transform="translate(13,382) rotate(-90)" font-size="11.67" text-anchor="middle" fill="#000">Deg.C</text>
<text transform="translate(820,6) rotate(90)" font-size="8.1" fill="#8c8c8c">RRDTOOL / TOBI OETIKER</text>
<g><rect x="15.5" y="754.5" width="8" height="9" fill="#0000ff" stroke="#000" stroke-width="1"/><text transform="translate(30,763) scale(1,1.08)" font-size="11.67" fill="#000">Elevator</text><rect x="226.5" y="754.5" width="8" height="9" fill="#00f8e8" stroke="#000" stroke-width="1"/><text transform="translate(241,763) scale(1,1.08)" font-size="11.67" fill="#000">Telescope Base</text><rect x="436.5" y="754.5" width="8" height="9" fill="#ff0000" stroke="#000" stroke-width="1"/><text transform="translate(451,763) scale(1,1.08)" font-size="11.67" fill="#000">Craneway Right</text><rect x="647.5" y="754.5" width="8" height="9" fill="#dd8800" stroke="#000" stroke-width="1"/><text transform="translate(662,763) scale(1,1.08)" font-size="11.67" fill="#000">Craneway Left</text><rect x="15.5" y="768.5" width="8" height="9" fill="#55a800" stroke="#000" stroke-width="1"/><text transform="translate(30,777) scale(1,1.08)" font-size="11.67" fill="#000">Domefloor</text><rect x="226.5" y="768.5" width="8" height="9" fill="#00c8ff" stroke="#000" stroke-width="1"/><text transform="translate(241,777) scale(1,1.08)" font-size="11.67" fill="#000">Telescope M1</text><rect x="436.5" y="768.5" width="8" height="9" fill="#ffcc00" stroke="#000" stroke-width="1"/><text transform="translate(451,777) scale(1,1.08)" font-size="11.67" fill="#000">Telescope Structure</text><rect x="647.5" y="768.5" width="8" height="9" fill="#555555" stroke="#000" stroke-width="1"/><text transform="translate(662,777) scale(1,1.08)" font-size="11.67" fill="#000">Telescope Top End</text><rect x="15.5" y="782.5" width="8" height="9" fill="#a6ff24" stroke="#000" stroke-width="1"/><text transform="translate(30,791) scale(1,1.08)" font-size="11.67" fill="#000">Outside Temperature</text><rect x="654.5" y="782.5" width="8" height="9" fill="#aa00ff" stroke="#000" stroke-width="1"/><text transform="translate(669,791) scale(1,1.08)" font-size="11.67" fill="#000">Mean Dome Temperature</text></g>
</svg></body></html>
